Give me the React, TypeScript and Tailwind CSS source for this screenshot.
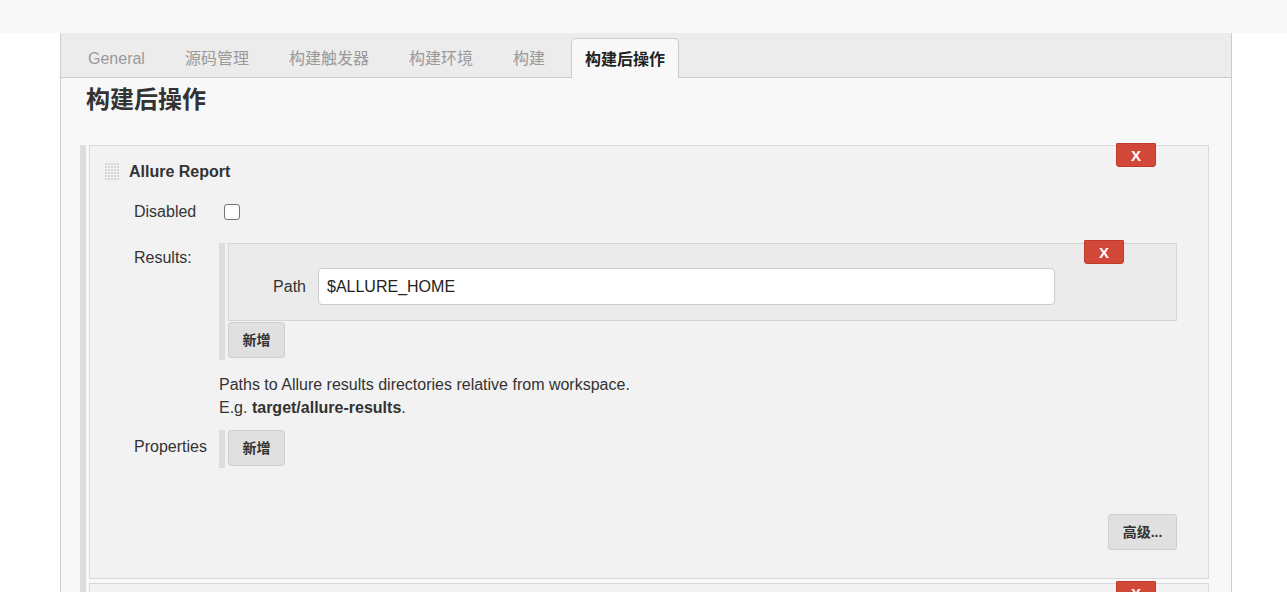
import React from "react";

const TABS = ["General", "源码管理", "构建触发器", "构建环境", "构建", "构建后操作"];
const ACTIVE_TAB = "构建后操作";

const FONT = {
  fontFamily: '"Liberation Sans", Arial, "Noto Sans CJK SC", sans-serif',
};

function DeleteButton({ className = "" }: { className?: string }) {
  return (
    <button
      className={`absolute w-[40px] h-[24px] bg-[#d24939] border border-[#c13b2c] rounded-b-[3px] rounded-t-[1px] text-white text-[15px] font-bold leading-none flex items-center justify-center ${className}`}
    >
      X
    </button>
  );
}

function GreyButton({ label, className = "" }: { label: string; className?: string }) {
  return (
    <button
      className={`h-[36px] px-[12px] bg-[#e0e0e0] border border-[#cfcfcf] rounded-[3px] text-[#333] text-[14px] font-bold ${className}`}
    >
      {label}
    </button>
  );
}

function DragHandle() {
  // small grid of dots
  const dots = [];
  for (let r = 0; r < 6; r++) {
    for (let c = 0; c < 5; c++) {
      dots.push(<rect key={`${r}-${c}`} x={c * 3} y={r * 3 + 1} width="2" height="2" fill="#d6d6d6" />);
    }
  }
  return (
    <svg width="15" height="20" viewBox="0 0 15 20">
      {dots}
    </svg>
  );
}

export default function App() {
  return (
    <div className="min-h-[592px] bg-white text-[#333]" style={FONT}>
      {/* top strip */}
      <div className="h-[33px] bg-[#f8f8f8]" />

      <div className="pl-[60px]">
        <div className="w-[1172px] min-h-[559px] border-x border-[#cccccc] bg-[#f8f8f8]">
          {/* tabs */}
          <div className="h-[45px] bg-[#ececec] border-b border-[#cccccc] flex items-end pl-[13px] gap-[12px]">
            {TABS.map((t) =>
              t === ACTIVE_TAB ? (
                <div
                  key={t}
                  className="h-[40px] -mb-px pt-[3px] px-[13px] bg-[#f8f8f8] border border-b-0 border-[#cccccc] rounded-t-[5px] flex items-center text-[16px] font-bold text-[#222]"
                >
                  {t}
                </div>
              ) : (
                <div key={t} className="h-[40px] pt-[3px] px-[14px] flex items-center text-[16px] text-[#9a9a9a]">
                  {t}
                </div>
              )
            )}
          </div>

          <h1 className="pl-[25px] pt-[8px] text-[24px] leading-[28px] font-bold text-[#333]">构建后操作</h1>

          {/* sections */}
          <div className="mt-[31px] ml-[19px] mr-[22px] flex gap-[3px]">
            <div className="w-[6px] bg-[#dddddd]" />
            <div className="flex-1 flex flex-col gap-[4px]">
              {/* Allure Report */}
              <div className="relative h-[434px] border border-[#dadada] bg-[#f2f2f2]">
                <DeleteButton className="-top-[3px] right-[52px]" />

                <div className="flex items-center pt-[14px] pl-[15px] gap-[9px]">
                  <DragHandle />
                  <span className="text-[16px] font-bold text-[#333]">Allure Report</span>
                </div>

                {/* Disabled */}
                <div className="flex items-center mt-[18px] h-[20px]">
                  <div className="w-[129px] pl-[44px] text-[16px]">Disabled</div>
                  <div className="ml-[5px] w-[16px] h-[16px] rounded-[3px] border border-[#767676] bg-white" />
                </div>

                {/* Results */}
                <div className="flex mt-[21px]">
                  <div className="w-[129px] pl-[44px] pt-[4px] text-[16px] leading-[22px]">Results:</div>
                  <div className="flex-1 mr-[31px] flex gap-[3px]">
                    <div className="w-[6px] h-[117px] bg-[#dddddd]" />
                    <div className="flex-1">
                      <div className="relative h-[78px] border border-[#d6d6d6] bg-[#ebebeb] flex items-center">
                        <DeleteButton className="-top-[4px] right-[52px]" />
                        <div className="w-[77px] text-right text-[16px] text-[#333] mt-[9px]">Path</div>
                        <input
                          readOnly
                          value="$ALLURE_HOME"
                          className="ml-[12px] mt-[9px] w-[737px] h-[37px] bg-white border border-[#cccccc] rounded-[4px] px-[8px] text-[16px] text-[#222] outline-none"
                          style={FONT}
                        />
                      </div>
                      <GreyButton label="新增" className="mt-[1px] w-[57px]" />
                    </div>
                  </div>
                </div>

                {/* help */}
                <div className="ml-[129px] mt-[13px] text-[16px] leading-[23px] text-[#333]">
                  <div>Paths to Allure results directories relative from workspace.</div>
                  <div>
                    E.g. <b>target/allure-results</b>.
                  </div>
                </div>

                {/* Properties */}
                <div className="flex mt-[11px]">
                  <div className="w-[129px] pl-[44px] pt-[6px] text-[16px] leading-[22px]">Properties</div>
                  <div className="flex gap-[3px]">
                    <div className="w-[6px] h-[38px] bg-[#dddddd]" />
                    <GreyButton label="新增" className="w-[57px] h-[35px]" />
                  </div>
                </div>

                <div className="flex justify-end pr-[31px] mt-[46px]">
                  <GreyButton label="高级..." className="w-[69px] h-[35px]" />
                </div>
              </div>

              {/* next publisher (cut off) */}
              <div className="relative h-[40px] border border-[#dadada] bg-[#f2f2f2]">
                <DeleteButton className="-top-[3px] right-[52px]" />
              </div>
            </div>
          </div>
        </div>
      </div>
    </div>
  );
}
